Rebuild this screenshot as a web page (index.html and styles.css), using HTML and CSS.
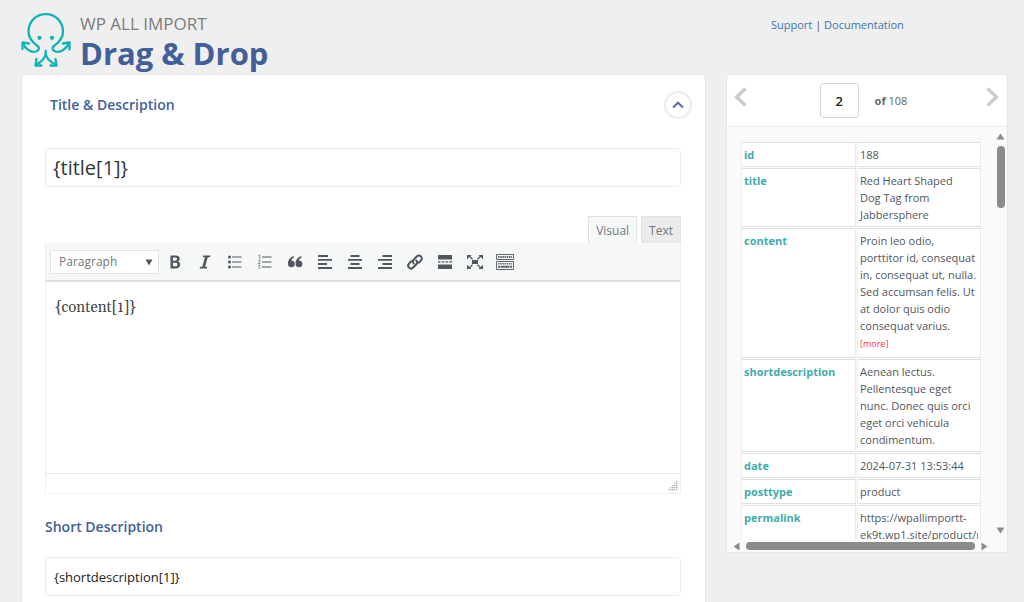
FILE: index.html
```
<!DOCTYPE html>
<html lang="en">
<head>
<meta charset="utf-8">
<title>WP All Import - Drag &amp; Drop</title>
<link rel="stylesheet" href="styles.css">
</head>
<body>
<div class="app">
  <div class="main-column">
    <header class="brand">
      <svg class="logo" width="52" height="57" viewBox="0 0 52 57" fill="none" stroke="#10b3b8" stroke-width="2.3" stroke-linecap="round" stroke-linejoin="round" aria-hidden="true">
        <path d="M2 31C4 37 10 41 15 39.500C19 38 18.500 35 16 33.500C11 30 7.500 25 7.500 19.500C7.500 9.500 15 2.200 24.700 2.200S42 9.500 42 19.500C42 25 38.500 30 33.500 33.500C31 35 30.500 38 34.500 39.500C39.500 41 45.500 37 48 31"/>
        <path d="M1.500 37V30.500L8 31.500M48.500 37.500V30.500L42 31.500"/>
        <path d="M24.700 39V41C24.700 46 20 50 15 53M24.700 41C24.700 46 29.500 50 35 53"/>
        <path d="M15.500 47L14.500 53.500H20.500M34.500 47L35.500 53.500H29.500"/>
        <circle cx="18.500" cy="25.800" r="1" fill="#10b3b8"/><circle cx="31" cy="25.800" r="1" fill="#10b3b8"/>
      </svg>
      <div class="brand-text">
        <p class="product">WP ALL IMPORT</p>
        <h1>Drag &amp; Drop</h1>
      </div>
    </header>

    <main class="panel">
      <div class="panel-head">
        <h2>Title &amp; Description</h2>
        <button class="collapse" type="button" aria-label="Collapse section">
          <svg width="12" height="8" viewBox="0 0 12 8" fill="none" stroke="#5470ae" stroke-width="2"><path d="M1 6.500L6 1.700L11 6.500"/></svg>
        </button>
      </div>

      <input class="field title-field" type="text" value="{title[1]}" aria-label="Title">

      <div class="tabs">
        <button class="tab tab-active" type="button">Visual</button>
        <button class="tab" type="button">Text</button>
      </div>
      <div class="editor">
        <div class="toolbar">
          <div class="format">
            <select aria-label="Block format"><option>Paragraph</option></select>
            <svg class="format-arrow" width="8" height="7" viewBox="0 0 8 7" fill="#50575e" aria-hidden="true"><path d="M0.500 0.500H7.500L4 6.500Z"/></svg>
          </div>
          <button class="tool" type="button" aria-label="Bold"><svg viewBox="0 0 20 20"><path d="M5.500 3.500h4.800c3 0 4.400 1.100 4.400 3.200 0 1.500-.8 2.500-2.200 2.900 1.800.3 2.700 1.300 2.700 3 0 2.400-1.700 3.900-4.700 3.900h-5zM8 8.700h2c1.300 0 2-.5 2-1.600s-.7-1.500-2-1.500H8zm0 5.600h2.200c1.500 0 2.200-.6 2.200-1.900 0-1.100-.8-1.700-2.300-1.700H8z"/></svg></button>
          <button class="tool" type="button" aria-label="Italic"><svg viewBox="0 0 20 20"><path d="M8.300 3.500h7.200l-.5 1.800h-2.200l-2.700 9.400h2.200l-.5 1.800H4.600l.5-1.800h2.200l2.700-9.400H7.800z"/></svg></button>
          <button class="tool" type="button" aria-label="Bulleted list"><svg viewBox="0 0 20 20"><circle cx="4.500" cy="5" r="1.500"/><circle cx="4.500" cy="10" r="1.500"/><circle cx="4.500" cy="15" r="1.500"/><path d="M7 4.500h9.500v1H7zM7 9.500h9.500v1H7zM7 14.500h9.500v1H7z"/></svg></button>
          <button class="tool" type="button" aria-label="Numbered list"><svg viewBox="0 0 20 20"><path d="M7 4.500h9.500v1H7zM7 9.500h9.500v1H7zM7 14.500h9.500v1H7z"/><path d="M3.500 3.500L4.700 3v4M3.300 8.500h1.600v1.300L3.300 11.500H5.200M3.300 13.300h1.700L4 14.700c1.500 0 1.500 2-.7 1.800" fill="none" stroke="#666d74" stroke-width=".8"/></svg></button>
          <button class="tool" type="button" aria-label="Quote"><svg viewBox="0 0 20 20"><path d="M9 4.200v1.300C7.500 6.100 6.600 7.200 6.500 8.800c1.900-.2 3.300 1 3.300 3a3.400 3.400 0 0 1-6.800.2C2.800 8 5 4.900 9 4.200zM16.600 4.200v1.300c-1.500.6-2.400 1.700-2.500 3.300 1.900-.2 3.300 1 3.300 3a3.400 3.400 0 0 1-6.800.2c-.2-4 2-7.100 6-7.800z"/></svg></button>
          <button class="tool" type="button" aria-label="Align left"><svg viewBox="0 0 20 20"><path d="M3 3h10v2H3zM3 7h14v1.800H3zM3 11h9v2H3zM3 15h14v2H3z"/></svg></button>
          <button class="tool" type="button" aria-label="Align center"><svg viewBox="0 0 20 20"><path d="M5.500 3h9v2h-9zM3 7h14v1.800H3zM5.500 11h9v2h-9zM3 15h14v2H3z"/></svg></button>
          <button class="tool" type="button" aria-label="Align right"><svg viewBox="0 0 20 20"><path d="M7.500 3H17v2H7.500zM3 7h14v1.800H3zM7.500 11H17v2H7.500zM3 15h14v2H3z"/></svg></button>
          <button class="tool" type="button" aria-label="Insert link"><svg viewBox="0 0 20 20" fill="none" stroke="#50575e" stroke-width="2" stroke-linecap="round"><path d="M8.800 11.600C7.500 10.200 7.700 8.700 8.800 7.500l3-3c1.300-1.300 3-1.200 4.100-.1 1.200 1.200 1.200 2.900 0 4.100L13.700 10.800"/><path d="M11.200 8.400c1.300 1.400 1.100 2.900 0 4.100l-3 3c-1.300 1.300-3 1.200-4.100.1-1.200-1.200-1.200-2.900 0-4.100L6.300 9.200"/></svg></button>
          <button class="tool" type="button" aria-label="Read more tag"><svg viewBox="0 0 20 20"><path d="M3 3h14v4.500H3zM3 9.200h2.500v1.400H3zM6.700 9.200h2.600v1.400H6.700zM10.500 9.200h2.600v1.400h-2.600zM14.300 9.200H17v1.400h-2.700zM3 12.500h14V17H3z"/></svg></button>
          <button class="tool" type="button" aria-label="Fullscreen"><svg viewBox="0 0 20 20"><path d="M7 8h6v4H7zM2 3h4.500L5.300 4.200 8 6.800l-.9.900-2.700-2.600L2 7.200zM18 3h-4.500l1.200 1.200L12 6.800l.9.900 2.700-2.600L18 7.200zM2 17h4.500l-1.200-1.200L8 13.200l-.9-.9-2.700 2.600L2 12.800zM18 17h-4.500l1.200-1.200-2.700-2.600.9-.9 2.700 2.600 2.400-2.100z"/></svg></button>
          <button class="tool" type="button" aria-label="Toggle toolbar"><svg viewBox="0 0 20 20" fill="none" stroke="#60676e"><path d="M1.500 2.500h17v5h-17zM1.500 9.500h17v8h-17z"/><path d="M3 5h14" stroke-width="2" stroke-dasharray="1.500 .7"/><path d="M3 11.800h14" stroke-width="1.500" stroke-dasharray="1.500 .7"/><path d="M3 14.800h2.500M6 14.800h8M14.500 14.800h2.500" stroke-width="2"/></svg></button>
        </div>
        <div class="editor-body" contenteditable="true" role="textbox" aria-label="Content">{content[1]}</div>
        <div class="statusbar">
          <svg width="10" height="10" viewBox="0 0 10 10" fill="#a9a9a9" aria-hidden="true"><path d="M8 0h1.300v1.300H8zM8 2h1.300v1.300H8zM6 2h1.300v1.300H6zM8 4h1.300v1.300H8zM6 4h1.300v1.300H6zM4 4h1.300v1.300H4zM8 6h1.300v1.300H8zM6 6h1.300v1.300H6zM4 6h1.300v1.300H4zM2 6h1.300v1.300H2zM8 8h1.300v1.300H8zM6 8h1.300v1.300H6zM4 8h1.300v1.300H4zM2 8h1.300v1.300H2zM0 8h1.300v1.300H0z"/></svg>
        </div>
      </div>

      <label class="section-label" for="short">Short Description</label>
      <input class="field short-field" id="short" type="text" value="{shortdescription[1]}">
    </main>
  </div>

  <aside class="side-column">
    <nav class="help"><a href="#">Support</a> | <a href="#">Documentation</a></nav>
    <section class="preview">
      <div class="pager">
        <button class="page-arrow" type="button" aria-label="Previous record"><svg width="13" height="20" viewBox="0 0 13 20" fill="none" stroke="#ccc" stroke-width="3.500"><path d="M11.500 1.500L2.500 10L11.500 18.500"/></svg></button>
        <div class="page-count">
          <input class="page-input" type="text" value="2" aria-label="Record number">
          <span><strong>of</strong> 108</span>
        </div>
        <button class="page-arrow" type="button" aria-label="Next record"><svg width="13" height="20" viewBox="0 0 13 20" fill="none" stroke="#ccc" stroke-width="3.500"><path d="M1.500 1.500L10.500 10L1.500 18.500"/></svg></button>
      </div>
      <div class="viewer">
        <div class="records">
          <table>
            <tbody>
              <tr><th scope="row">id</th><td>188</td></tr>
              <tr><th scope="row">title</th><td>Red Heart Shaped Dog&nbsp;Tag from Jabbersphere</td></tr>
              <tr><th scope="row">content</th><td>Proin leo odio, porttitor id, consequat in, consequat ut, nulla. Sed accumsan felis. Ut at dolor quis odio consequat varius. <a class="more" href="#">[more]</a></td></tr>
              <tr><th scope="row">shortdescription</th><td>Aenean lectus. Pellentesque eget nunc. Donec quis orci eget orci vehicula condimentum.</td></tr>
              <tr><th scope="row">date</th><td>2024-07-31 13:53:44</td></tr>
              <tr><th scope="row">posttype</th><td>product</td></tr>
              <tr><th scope="row">permalink</th><td><div class="clip">https://wpallimportt-ek9t.wp1.site/product/red</div></td></tr>
            </tbody>
          </table>
        </div>
        <div class="bar bar-v" aria-hidden="true">
          <svg width="9" height="7" viewBox="0 0 9 7"><path d="M4.500 0.500L8.500 6.500H0.500Z"/></svg>
          <div class="track"><div class="thumb"></div></div>
          <svg width="9" height="7" viewBox="0 0 9 7"><path d="M4.500 6.500L8.500 0.500H0.500Z"/></svg>
        </div>
        <div class="bar bar-h" aria-hidden="true">
          <svg width="7" height="9" viewBox="0 0 7 9"><path d="M0.500 4.500L6.500 0.500V8.500Z"/></svg>
          <div class="thumb"></div>
          <svg width="7" height="9" viewBox="0 0 7 9"><path d="M6.500 4.500L0.500 0.500V8.500Z"/></svg>
        </div>
      </div>
    </section>
  </aside>
</div>
</body>
</html>
```
FILE: styles.css
```
* { box-sizing: border-box; }

body {
  margin: 0;
  background: #efefef;
  color: #50575e;
  font-family: "Open Sans", "Noto Sans", sans-serif;
  font-size: 12px;
}

button, input, select { font-family: inherit; color: inherit; }
button { padding: 0; border: 0; background: none; cursor: pointer; }
h1, h2, p { margin: 0; }

.app {
  display: grid;
  grid-template-columns: minmax(0, 1fr) 282px;
  gap: 20px;
  height: 100vh;
  overflow: hidden;
  padding: 0 16px 0 21px;
}

.main-column { display: flex; flex-direction: column; }

.brand {
  display: flex;
  gap: 7px;
  height: 74px;
  padding-top: 12px;
}
.brand-text { display: flex; flex-direction: column; }
.product { font-size: 17px; line-height: 24px; color: #7c7c7c; }
h1 { font-size: 31px; line-height: 34px; font-weight: 700; color: #425f9a; }
.logo { flex: none; }

.panel {
  flex: 1 0 auto;
  padding: 14px 24px 0 23px;
  background: #fff;
  border: 1px solid #e6e6e6;
  border-bottom: 0;
  border-radius: 4px 4px 0 0;
}
.panel-head {
  display: flex;
  align-items: center;
  justify-content: space-between;
  height: 31px;
  padding-left: 5px;
}
h2, .section-label {
  font-size: 14px;
  line-height: 20px;
  font-weight: 600;
  color: #425f9a;
}
.collapse {
  display: grid;
  place-items: center;
  width: 28px;
  height: 28px;
  margin-right: -11px;
  border: 2px solid #ececec;
  border-radius: 50%;
}

.field {
  display: block;
  width: 100%;
  height: 39px;
  padding: 0 8px;
  border: 1px solid #ebebeb;
  border-radius: 4px;
  background: #fff;
  color: #32373c;
}
.title-field { margin-top: 28px; padding: 0 7px; font-size: 20px; }
.short-field { margin-top: 20px; font-size: 13px; color: #222; }

.tabs {
  display: flex;
  justify-content: flex-end;
  gap: 4px;
  margin-top: 29px;
}
.tab {
  height: 27px;
  padding: 0 7px;
  border: 1px solid #e2e2e2;
  border-bottom: 0;
  background: #ebebeb;
  color: #6f767c;
  font-size: 12px;
}
.tab-active { background: #f6f7f7; }

.editor { border: 1px solid #efefef; border-top: 0; }
.toolbar {
  display: flex;
  align-items: center;
  gap: 2px;
  height: 39px;
  padding-left: 4px;
  background: #f6f7f7;
  border-bottom: 2px solid #dedede;
}
.format { position: relative; }
.format select {
  display: block;
  width: 109px;
  height: 24px;
  padding: 0 8px;
  appearance: none;
  border: 1px solid #e4e4e4;
  border-radius: 0;
  background: #fff;
  font-size: 12px;
  color: #72777c;
}
.format-arrow { position: absolute; right: 6px; top: 9px; pointer-events: none; }
.tool {
  display: grid;
  place-items: center;
  width: 28px;
  height: 28px;
  fill: #50575e;
}
.tool svg { width: 20px; height: 20px; }
.editor-body {
  height: 191px;
  padding: 16px 9px;
  font-family: Gelasio, Georgia, "Liberation Serif", serif;
  font-size: 15px;
  line-height: 20px;
  color: #444;
}
.statusbar {
  display: flex;
  justify-content: flex-end;
  align-items: flex-end;
  height: 20px;
  padding: 0 2px 2px 0;
  border-top: 1px solid #e2e2e2;
}
.section-label { display: block; margin-top: 23px; }

.side-column { display: flex; flex-direction: column; }
.help { height: 74px; padding: 16px 0 0 45px; font-size: 11px; line-height: 18px; }
.help a { color: #3a74b0; text-decoration: none; }

.preview {
  border: 1px solid #e6e6e6;
  border-radius: 4px 4px 0 0;
  background: #fafafa;
}
.pager {
  display: flex;
  align-items: center;
  justify-content: space-between;
  height: 52px;
  padding: 0 8px 0 7px;
  background: #fff;
  border-bottom: 1px solid #ececec;
  border-radius: 4px 4px 0 0;
}
.page-arrow { display: flex; padding-bottom: 8px; }
.page-count {
  display: flex;
  align-items: center;
  gap: 16px;
  padding-right: 6px;
  font-size: 11px;
  color: #666;
}
.page-input {
  width: 39px;
  height: 35px;
  padding: 0;
  border: 1px solid #d8d8d8;
  border-radius: 3px;
  background: #fff;
  color: #222;
  font-size: 13px;
  font-weight: 600;
  text-align: center;
}

.viewer {
  display: grid;
  grid-template-columns: minmax(0, 1fr) 13px;
  grid-template-rows: 413px 12px;
}
.records { overflow: hidden; padding: 14px 12px 0 13px; }
table {
  width: 100%;
  table-layout: fixed;
  border-spacing: 1px;
  font-size: 11px;
  line-height: 17px;
}
th, td {
  padding: 3px 2px;
  border: 1px solid #e0e0e0;
  border-left-color: #eee;
  border-right-color: #eaeaea;
  background: #fff;
  vertical-align: top;
  text-align: left;
}
th { width: 115px; color: #40acac; font-weight: 700; }
.more { display: block; font-size: 9px; line-height: 20px; color: #f33; text-decoration: none; }
.clip { overflow: hidden; }

.bar { display: flex; align-items: center; fill: #8b8b8b; }
.bar-v { flex-direction: column; justify-content: space-between; gap: 6px; padding: 6px 0; }
.bar-h { gap: 6px; padding: 0 6px; }
.thumb { background: #8b8b8b; border-radius: 4px; }
.track { flex: 1; }
.bar-v .thumb { width: 8px; height: 62px; }
.bar-h .thumb { flex: 1; height: 8px; }
```
